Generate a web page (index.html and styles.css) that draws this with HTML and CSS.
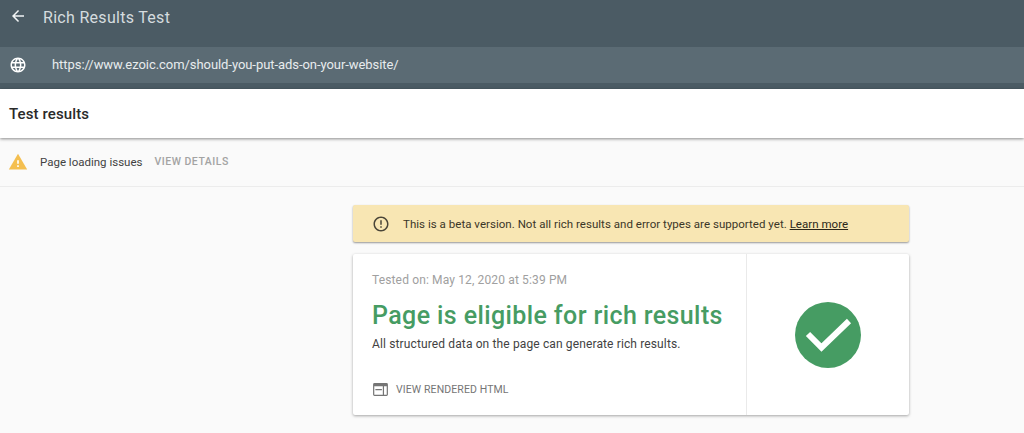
FILE: index.html
```html
<!DOCTYPE html>
<html lang="en">
<head>
<meta charset="utf-8">
<title>Rich Results Test</title>
<link rel="stylesheet" href="styles.css">
</head>
<body>
<header class="app-header">
  <div class="title-bar">
    <svg class="back-icon" viewBox="0 0 24 24" width="18" height="18"><path fill="#f1f4f5" d="M20 11H7.83l5.59-5.59L12 4l-8 8 8 8 1.41-1.41L7.83 13H20v-2z"/></svg>
    <span class="title">Rich Results Test</span>
  </div>
  <div class="url-bar">
    <svg class="globe-icon" viewBox="0 0 24 24" width="18" height="18"><path fill="#fff" d="M11.99 2C6.47 2 2 6.48 2 12s4.47 10 9.99 10C17.52 22 22 17.52 22 12S17.52 2 11.99 2zm6.93 6h-2.95c-.32-1.25-.78-2.45-1.38-3.56 1.84.63 3.37 1.91 4.33 3.56zM12 4.040c.83 1.2 1.48 2.53 1.91 3.96h-3.82c.43-1.43 1.08-2.76 1.91-3.96zM4.260 14C4.100 13.360 4 12.690 4 12s.1-1.360.26-2h3.380c-.08.66-.14 1.320-.14 2s.06 1.340.14 2H4.260zm.82 2h2.950c.32 1.250.78 2.450 1.380 3.560-1.840-.63-3.370-1.900-4.330-3.560zm2.950-8H5.080c.96-1.660 2.490-2.930 4.330-3.560C8.810 5.550 8.350 6.750 8.030 8zM12 19.960c-.83-1.200-1.480-2.530-1.910-3.960h3.820c-.43 1.430-1.080 2.760-1.910 3.960zM14.340 14H9.660c-.09-.66-.16-1.320-.16-2s.07-1.350.16-2h4.680c.09.650.16 1.320.16 2s-.07 1.340-.16 2zm.25 5.560c.6-1.110 1.060-2.310 1.380-3.560h2.950c-.96 1.650-2.490 2.930-4.330 3.560zM16.360 14c.08-.66.14-1.320.14-2s-.06-1.340-.14-2h3.380c.16.640.26 1.310.26 2s-.1 1.360-.26 2h-3.380z"/></svg>
    <span class="url">https://www.ezoic.com/should-you-put-ads-on-your-website/</span>
  </div>
</header>
<section class="results-bar"><h1 class="results-title">Test results</h1></section>
<section class="issues-row">
  <svg class="warn-icon" viewBox="0 0 24 24" width="20" height="20"><path fill="#f4bf50" d="M1 21h22L12 2 1 21z"/><path fill="#fff" d="M13 18h-2v-2h2v2zm0-4h-2v-4h2v4z"/></svg>
  <span class="issues-text">Page loading issues</span>
  <span class="issues-link">VIEW DETAILS</span>
</section>
<main class="content">
  <div class="column">
    <div class="banner">
      <svg class="info-icon" viewBox="0 0 24 24" width="18" height="18"><path fill="#4a4538" d="M11 15h2v2h-2zm0-8h2v6h-2zm1-5C6.470 2 2 6.480 2 12s4.470 10 10 10 10-4.480 10-10S17.520 2 12 2zm0 18c-4.420 0-8-3.580-8-8s3.580-8 8-8 8 3.580 8 8-3.580 8-8 8z"/></svg>
      <span class="banner-text">This is a beta version. Not all rich results and error types are supported yet. <a class="banner-link" href="#">Learn more</a></span>
    </div>
    <div class="card">
      <div class="card-main">
        <p class="tested">Tested on: May 12, 2020 at 5:39 PM</p>
        <h2 class="headline">Page is eligible for rich results</h2>
        <p class="summary">All structured data on the page can generate rich results.</p>
        <div class="card-action">
          <svg class="html-icon" viewBox="0 0 16 14" width="15" height="13"><path fill="#757575" d="M1.500 0h13A1.500 1.500 0 0 1 16 1.500v11a1.500 1.500 0 0 1-1.500 1.500h-13A1.500 1.500 0 0 1 0 12.500v-11A1.500 1.500 0 0 1 1.500 0zM1.300 3.500v9.200h9.200V3.500H1.300zm10.500 0v9.200h2.900V3.500h-2.900zM2.500 6.500h7v1.200h-7z"/></svg>
          <span class="action-text">VIEW RENDERED HTML</span>
        </div>
      </div>
      <div class="card-side">
        <svg class="check-icon" viewBox="0 0 66 66" width="66" height="66"><circle cx="33" cy="33" r="33" fill="#469c63"/><path fill="none" stroke="#fff" stroke-width="6" d="M13 32l13.500 13.500L54 19"/></svg>
      </div>
    </div>
  </div>
</main>
</body>
</html>
```
FILE: styles.css
```css
* { box-sizing: border-box; }
html, body { margin: 0; height: 433px; overflow: hidden; }
body { background: #fafafa; font-family: Roboto, "Liberation Sans", sans-serif; color: #212121; }
.app-header { background: #4b5b64; height: 89px; }
.title-bar { height: 47px; display: flex; align-items: flex-start; padding: 7px 0 0 9px; }
.back-icon { flex: none; }
.title { margin-left: 16px; padding-top: 1px; font-size: 16px; line-height: 19px; letter-spacing: 0.3px; color: #d5dcdf; }
.url-bar { height: 36px; background: #5b6b74; display: flex; align-items: center; padding-left: 9px; }
.url { margin-left: 25px; padding-bottom: 2px; font-size: 13px; letter-spacing: -0.06px; color: #e8ecee; }
.results-bar { height: 49px; background: #fff; display: flex; align-items: center; padding-left: 9px; box-shadow: 0 1px 3px rgba(0,0,0,.45); position: relative; }
.results-title { margin: 0; font-size: 15px; font-weight: 500; letter-spacing: 0.12px; color: #2a2a2a; }
.issues-row { height: 49px; display: flex; align-items: center; padding: 0 0 1px 8px; border-bottom: 1px solid #ececec; }
.issues-text { margin-left: 12px; font-size: 11.5px; color: #424242; }
.issues-link { margin-left: 12px; font-size: 10.5px; font-weight: 500; letter-spacing: 0.5px; color: #a3a3a3; }
.content { display: flex; padding: 18px 0 0 353px; }
.column { width: 556px; display: flex; flex-direction: column; gap: 12px; }
.banner { height: 37px; background: #f8e6b3; display: flex; align-items: center; padding-left: 19px; border-radius: 2px; box-shadow: 0 1px 2px rgba(0,0,0,.4); }
.banner-text { margin-left: 13px; font-size: 11.5px; letter-spacing: 0.03px; color: #3b3628; }
.banner-link { color: #2b2619; text-decoration: underline; }
.card { height: 161px; background: #fff; display: flex; border-radius: 2px; box-shadow: 0 1px 3px rgba(0,0,0,.35); }
.card-main { width: 394px; border-right: 1px solid #eaeaea; padding: 19px 0 0 19px; }
.tested { margin: 0; font-size: 12px; line-height: 14px; letter-spacing: 0.14px; color: #a0a0a0; }
.headline { margin: 14px 0 0; font-size: 25px; line-height: 30px; font-weight: 500; letter-spacing: 0.39px; color: #469c63; }
.summary { margin: 6px 0 0; font-size: 12px; line-height: 14px; letter-spacing: 0.13px; color: #424242; }
.card-action { display: flex; align-items: center; margin-top: 32px; padding-left: 1px; }
.html-icon { flex: none; }
.action-text { margin-left: 8px; font-size: 10.5px; letter-spacing: 0.11px; color: #757575; }
.card-side { flex: 1; display: flex; align-items: center; justify-content: center; }
```
